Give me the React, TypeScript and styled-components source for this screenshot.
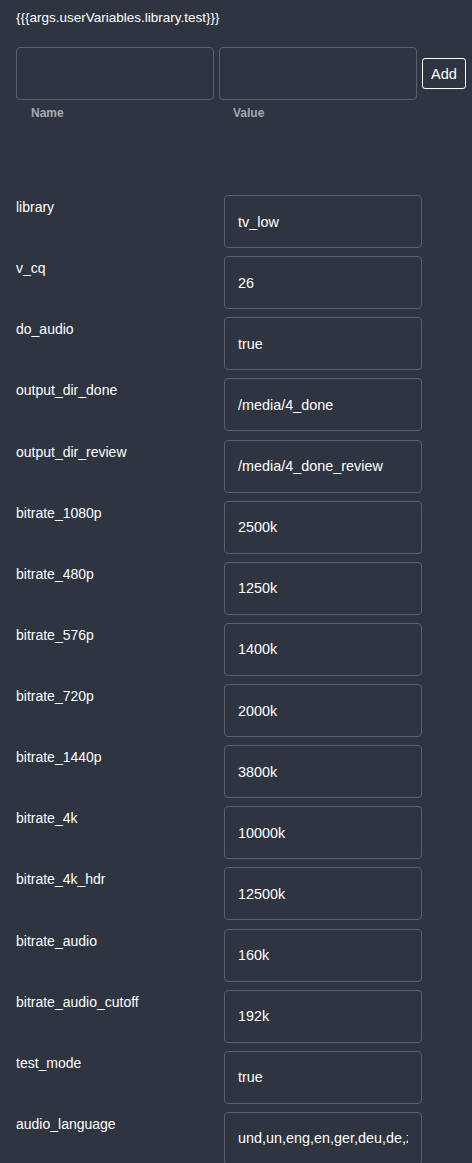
import React, { useState } from 'react';
import styled, { createGlobalStyle } from 'styled-components';

const GlobalStyle = createGlobalStyle`
    body {
        margin: 0;
        background: #2e3440;
        font-family: 'Liberation Sans', Arial, sans-serif;
    }
`;

const Page = styled.div`
    padding: 10px 16px 0 16px;
    color: #ffffff;
    min-height: 1163px;
    box-sizing: border-box;
`;

const Template = styled.div`
    font-size: 13.5px;
    line-height: 15px;
`;

const AddBar = styled.div`
    display: flex;
    align-items: center;
    gap: 5px;
    margin-top: 22px;
`;

const Field = styled.div`
    display: flex;
    flex-direction: column;
    width: 198px;
`;

const Box = styled.input`
    box-sizing: border-box;
    width: 198px;
    height: 53px;
    background: transparent;
    border: 1px solid #5a5f6b;
    border-radius: 4px;
    color: #ffffff;
    font-family: inherit;
    font-size: 14.4px;
    padding: 0 13px;
    outline: none;
`;

const Caption = styled.span`
    font-size: 12px;
    font-weight: bold;
    color: #a3a8b3;
    margin-top: 6px;
    padding-left: ${(p: { $indent: number }) => p.$indent}px;
`;

const AddButton = styled.button`
    align-self: flex-start;
    margin-top: 11px;
    height: 31px;
    padding: 0 8px;
    background: transparent;
    border: 1px solid #ffffff;
    border-radius: 3px;
    color: #ffffff;
    font-family: inherit;
    font-size: 14.5px;
    cursor: pointer;
`;

const List = styled.div`
    display: flex;
    flex-direction: column;
    gap: 8.13px;
    margin-top: 75px;
`;

const Row = styled.div`
    display: flex;
    align-items: flex-start;
`;

const Key = styled.div`
    width: 208px;
    font-size: 14px;
    line-height: 16px;
    padding-top: 4px;
`;

const vars: [string, string][] = [
    ['library', 'tv_low'],
    ['v_cq', '26'],
    ['do_audio', 'true'],
    ['output_dir_done', '/media/4_done'],
    ['output_dir_review', '/media/4_done_review'],
    ['bitrate_1080p', '2500k'],
    ['bitrate_480p', '1250k'],
    ['bitrate_576p', '1400k'],
    ['bitrate_720p', '2000k'],
    ['bitrate_1440p', '3800k'],
    ['bitrate_4k', '10000k'],
    ['bitrate_4k_hdr', '12500k'],
    ['bitrate_audio', '160k'],
    ['bitrate_audio_cutoff', '192k'],
    ['test_mode', 'true'],
    ['audio_language', 'und,un,eng,en,ger,deu,de,zxx'],
];

export default function App() {
    const [name, setName] = useState('');
    const [value, setValue] = useState('');

    return (
        <Page>
            <GlobalStyle />
            <Template>{'{{{args.userVariables.library.test}}}'}</Template>
            <AddBar>
                <Field>
                    <Box value={name} onChange={(e) => setName(e.target.value)} />
                    <Caption $indent={15}>Name</Caption>
                </Field>
                <Field>
                    <Box value={value} onChange={(e) => setValue(e.target.value)} />
                    <Caption $indent={14}>Value</Caption>
                </Field>
                <AddButton type="button">Add</AddButton>
            </AddBar>
            <List>
                {vars.map(([k, v]) => (
                    <Row key={k}>
                        <Key>{k}</Key>
                        <Box defaultValue={v} />
                    </Row>
                ))}
            </List>
        </Page>
    );
}
